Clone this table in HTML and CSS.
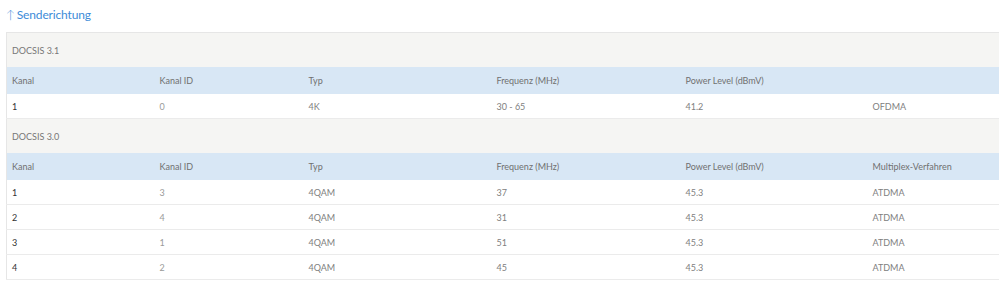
FILE: index.html
```html
<!DOCTYPE html>
<html lang="de">
<head>
<meta charset="utf-8">
<title>Senderichtung</title>
<link rel="stylesheet" href="styles.css">
</head>
<body>
<h2 class="title"><span class="arrow">↑</span> Senderichtung</h2>
<table class="grid">
  <colgroup>
    <col class="c1"><col class="c2"><col class="c3"><col class="c4"><col class="c5"><col class="c6">
  </colgroup>
  <tr class="group"><td colspan="6">DOCSIS 3.1</td></tr>
  <tr class="head"><td>Kanal</td><td>Kanal ID</td><td>Typ</td><td>Frequenz (MHz)</td><td>Power Level (dBmV)</td><td></td></tr>
  <tr class="row"><td class="k">1</td><td class="id">0</td><td>4K</td><td>30 - 65</td><td>41.2</td><td>OFDMA</td></tr>
  <tr class="group"><td colspan="6">DOCSIS 3.0</td></tr>
  <tr class="head"><td>Kanal</td><td>Kanal ID</td><td>Typ</td><td>Frequenz (MHz)</td><td>Power Level (dBmV)</td><td>Multiplex-Verfahren</td></tr>
  <tr class="row"><td class="k">1</td><td class="id">3</td><td>4QAM</td><td>37</td><td>45.3</td><td>ATDMA</td></tr>
  <tr class="row"><td class="k">2</td><td class="id">4</td><td>4QAM</td><td>31</td><td>45.3</td><td>ATDMA</td></tr>
  <tr class="row"><td class="k">3</td><td class="id">1</td><td>4QAM</td><td>51</td><td>45.3</td><td>ATDMA</td></tr>
  <tr class="row"><td class="k">4</td><td class="id">2</td><td>4QAM</td><td>45</td><td>45.3</td><td>ATDMA</td></tr>
</table>
</body>
</html>
```
FILE: styles.css
```css
html, body { margin: 0; padding: 0; background: #fff; }
body {
  font-family: "Lato", "Open Sans", sans-serif;
  color: #666;
  padding: 0 0 0 6px;
  overflow: hidden;
}
.title {
  margin: 0;
  height: 32px;
  line-height: 29px;
  font-size: 12px;
  font-weight: 400;
  color: #3d8bd8;
  letter-spacing: -0.15px;
}
.arrow { font-weight: 300; margin-right: -1px; }
.grid {
  border-collapse: collapse;
  table-layout: fixed;
  width: 1000px;
  font-size: 9px;
  border-left: 1px solid #e6e6e6;
  border-top: 1px solid #e6e6e6;
}
.c1 { width: 148px; }
.c2 { width: 149px; }
.c3 { width: 188px; }
.c4 { width: 189px; }
.c5 { width: 187px; }
.c6 { width: 139px; }
.grid td { padding: 0 0 0 5px; white-space: nowrap; }
.group td { background: #f5f5f3; height: 34px; color: #777; }
.head td { background: #d8e7f5; height: 27px; color: #707070; }
.row td { height: 24px; border-bottom: 1px solid #ebebeb; color: #808080; }
.row td.k { color: #333; }
.row td.id { color: #9a9a9a; }
```
